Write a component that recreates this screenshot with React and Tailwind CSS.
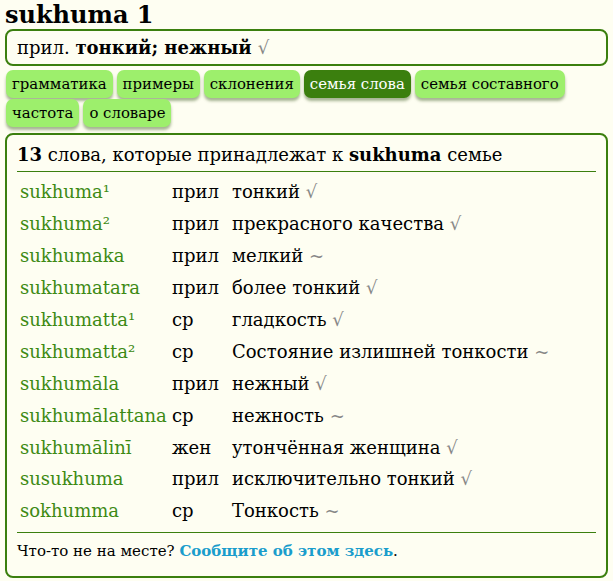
import React from "react";

const rows = [
  ["sukhuma¹", "прил", "тонкий", "√"],
  ["sukhuma²", "прил", "прекрасного качества", "√"],
  ["sukhumaka", "прил", "мелкий", "~"],
  ["sukhumatara", "прил", "более тонкий", "√"],
  ["sukhumatta¹", "ср", "гладкость", "√"],
  ["sukhumatta²", "ср", "Состояние излишней тонкости", "~"],
  ["sukhumāla", "прил", "нежный", "√"],
  ["sukhumālattana", "ср", "нежность", "~"],
  ["sukhumālinī", "жен", "утончённая женщина", "√"],
  ["susukhuma", "прил", "исключительно тонкий", "√"],
  ["sokhumma", "ср", "Тонкость", "~"],
];

const tabs = [
  ["грамматика", false],
  ["примеры", false],
  ["склонения", false],
  ["семья слова", true],
  ["семья составного", false],
  ["частота", false],
  ["о словаре", false],
];

export default function App() {
  return (
    <div
      className="min-h-[581px] w-[613px] bg-[#fefef2] text-black px-[5px]"
      style={{ fontFamily: '"DejaVu Serif", serif' }}
    >
      <h1 className="text-[24px] font-bold leading-[29px] h-[29px]">sukhuma 1</h1>
      <div className="border-2 border-[#3b7f0e] rounded-[8px] h-[37px] flex items-center pl-[10px] text-[18px]">
        <span>прил.&nbsp;</span>
        <b>тонкий; нежный</b>
        <span className="text-[#888] ml-[6px]">√</span>
      </div>
      <div className="flex flex-wrap gap-x-[4px] gap-y-[1px] pl-[1px] pt-[4px]">
        {tabs.map(([t, active]) => (
          <div
            key={t}
            className={
              "h-[28px] px-[6px] rounded-[7px] flex items-center text-[14.9px] shadow-[0_3px_3px_rgba(60,90,30,0.45)] " +
              (active ? "bg-[#3b7f0e] text-white" : "bg-[#9def6c] text-black")
            }
          >
            {t}
          </div>
        ))}
      </div>
      <div className="mt-[6px] border-2 border-[#3b7f0e] rounded-[8px] px-[10px] pb-[15px] mb-[4px]">
        <div className="text-[18px] pt-[8px] pb-[4px] border-b border-[#3b7f0e] leading-[24px]">
          <b>13</b> слова, которые принадлежат к <b>sukhuma</b> семье
        </div>
        <div className="pt-[4px] pb-[5px] border-b border-[#3b7f0e]">
          {rows.map(([w, pos, m, mark], i) => (
            <div key={i} className="flex h-[31.9px] items-center text-[18px]">
              <div className="w-[155px] shrink-0 pl-[3px] text-[#3d8a14] whitespace-nowrap">{w}</div>
              <div className="w-[60px] shrink-0">{pos}</div>
              <div className="whitespace-nowrap">
                {m} <span className="text-[#888]">{mark}</span>
              </div>
            </div>
          ))}
        </div>
        <div className="text-[15px] pt-[8px] leading-[20px]">
          Что-то не на месте? <b className="text-[#1a9dcc]">Сообщите об этом здесь</b>.
        </div>
      </div>
    </div>
  );
}
